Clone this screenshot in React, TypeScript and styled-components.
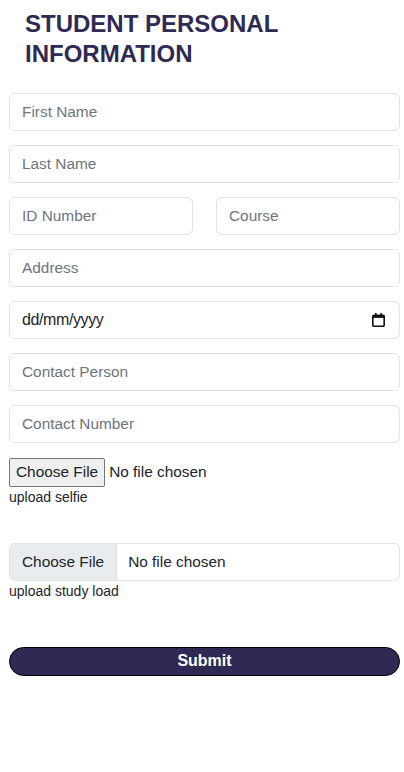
import styled, { createGlobalStyle } from 'styled-components';

const GlobalStyle = createGlobalStyle`
  body {
    margin: 0;
    background: #ffffff;
    font-family: 'Liberation Sans', Arial, sans-serif;
    color: #212529;
  }
  * {
    box-sizing: border-box;
  }
`;

const Page = styled.div`
  padding: 9px 4px 40px 9px;
`;

const Title = styled.h1`
  margin: 0 0 24px 16px;
  font-size: 24px;
  line-height: 30px;
  font-weight: bold;
  color: #2e2a54;
`;

const Form = styled.form`
  display: flex;
  flex-direction: column;
  gap: 14px;
`;

const Row = styled.div`
  display: grid;
  grid-template-columns: 1fr 1fr;
  gap: 23px;
`;

const Field = styled.input`
  display: block;
  width: 100%;
  height: 38px;
  padding: 6px 12px;
  border: 1px solid #dee2e6;
  border-radius: 6px;
  font-family: inherit;
  font-size: 15.4px;
  color: #212529;
  background: #ffffff;
  outline: none;

  &::placeholder {
    color: #6c757d;
  }
`;

const DateBox = styled.label`
  display: flex;
  align-items: center;
  height: 38px;
  padding: 6px 14px 6px 12px;
  border: 1px solid #dee2e6;
  border-radius: 6px;
  background: #ffffff;
`;

const DateText = styled.input`
  flex: 1;
  min-width: 0;
  border: none;
  outline: none;
  padding: 0;
  font-family: inherit;
  font-size: 16px;
  letter-spacing: -0.4px;
  color: #212529;
  background: transparent;

  &::placeholder {
    color: #212529;
  }
`;

const FileGroup = styled.div<{ $space?: number }>`
  display: flex;
  flex-direction: column;
  align-items: flex-start;
  margin-top: ${(p) => p.$space || 0}px;
`;

const PlainFile = styled.input`
  font-family: inherit;
  font-size: 15.4px;
  line-height: 29px;
  color: #212529;

  &::file-selector-button {
    height: 29px;
    font-family: inherit;
    font-size: 15.4px;
    padding: 0 6px;
    margin-right: 4px;
    color: #212529;
    background: #efefef;
    border: 1px solid #767676;
    border-radius: 2px;
  }
`;

const BoxFile = styled.input`
  display: block;
  width: 100%;
  height: 38px;
  padding: 6px 12px;
  border: 1px solid #dee2e6;
  border-radius: 6px;
  overflow: hidden;
  font-family: inherit;
  font-size: 15.4px;
  line-height: 24px;
  color: #212529;
  background: #ffffff;

  &::file-selector-button {
    height: 38px;
    margin: -7px 11px -7px -12px;
    padding: 6px 12px;
    border: none;
    border-right: 1px solid #dee2e6;
    border-radius: 0;
    font-family: inherit;
    font-size: 15.4px;
    color: #212529;
    background: #e9ecef;
  }
`;

const Hint = styled.span`
  font-size: 14px;
  line-height: 18px;
  margin-top: 1px;
  color: #212529;
`;

const Submit = styled.button<{ $space?: number }>`
  height: 29px;
  margin-top: ${(p) => p.$space || 0}px;
  border: 1px solid #000000;
  border-radius: 15px;
  background: #2e2a54;
  color: #ffffff;
  font-family: inherit;
  font-size: 16px;
  font-weight: bold;
  cursor: pointer;
`;

function CalendarIcon() {
  return (
    <svg width="13" height="14" viewBox="0 0 13 14" aria-hidden="true">
      <rect x="3" y="0" width="1.6" height="3" fill="#111" />
      <rect x="8.4" y="0" width="1.6" height="3" fill="#111" />
      <rect x="0.8" y="2.3" width="11.4" height="11" rx="1.2" fill="none" stroke="#111" strokeWidth="1.6" />
      <rect x="0.8" y="2.3" width="11.4" height="2.6" fill="#111" />
    </svg>
  );
}

export default function App() {
  return (
    <Page>
      <GlobalStyle />
      <Title>
        STUDENT PERSONAL
        <br />
        INFORMATION
      </Title>
      <Form onSubmit={(e) => e.preventDefault()}>
        <Field placeholder="First Name" />
        <Field placeholder="Last Name" />
        <Row>
          <Field placeholder="ID Number" />
          <Field placeholder="Course" />
        </Row>
        <Field placeholder="Address" />
        <DateBox>
          <DateText placeholder="dd/mm/yyyy" readOnly />
          <CalendarIcon />
        </DateBox>
        <Field placeholder="Contact Person" />
        <Field placeholder="Contact Number" />
        <FileGroup>
          <PlainFile type="file" />
          <Hint>upload selfie</Hint>
        </FileGroup>
        <FileGroup $space={23}>
          <BoxFile type="file" />
          <Hint>upload study load</Hint>
        </FileGroup>
        <Submit type="submit" $space={33}>
          Submit
        </Submit>
      </Form>
    </Page>
  );
}
